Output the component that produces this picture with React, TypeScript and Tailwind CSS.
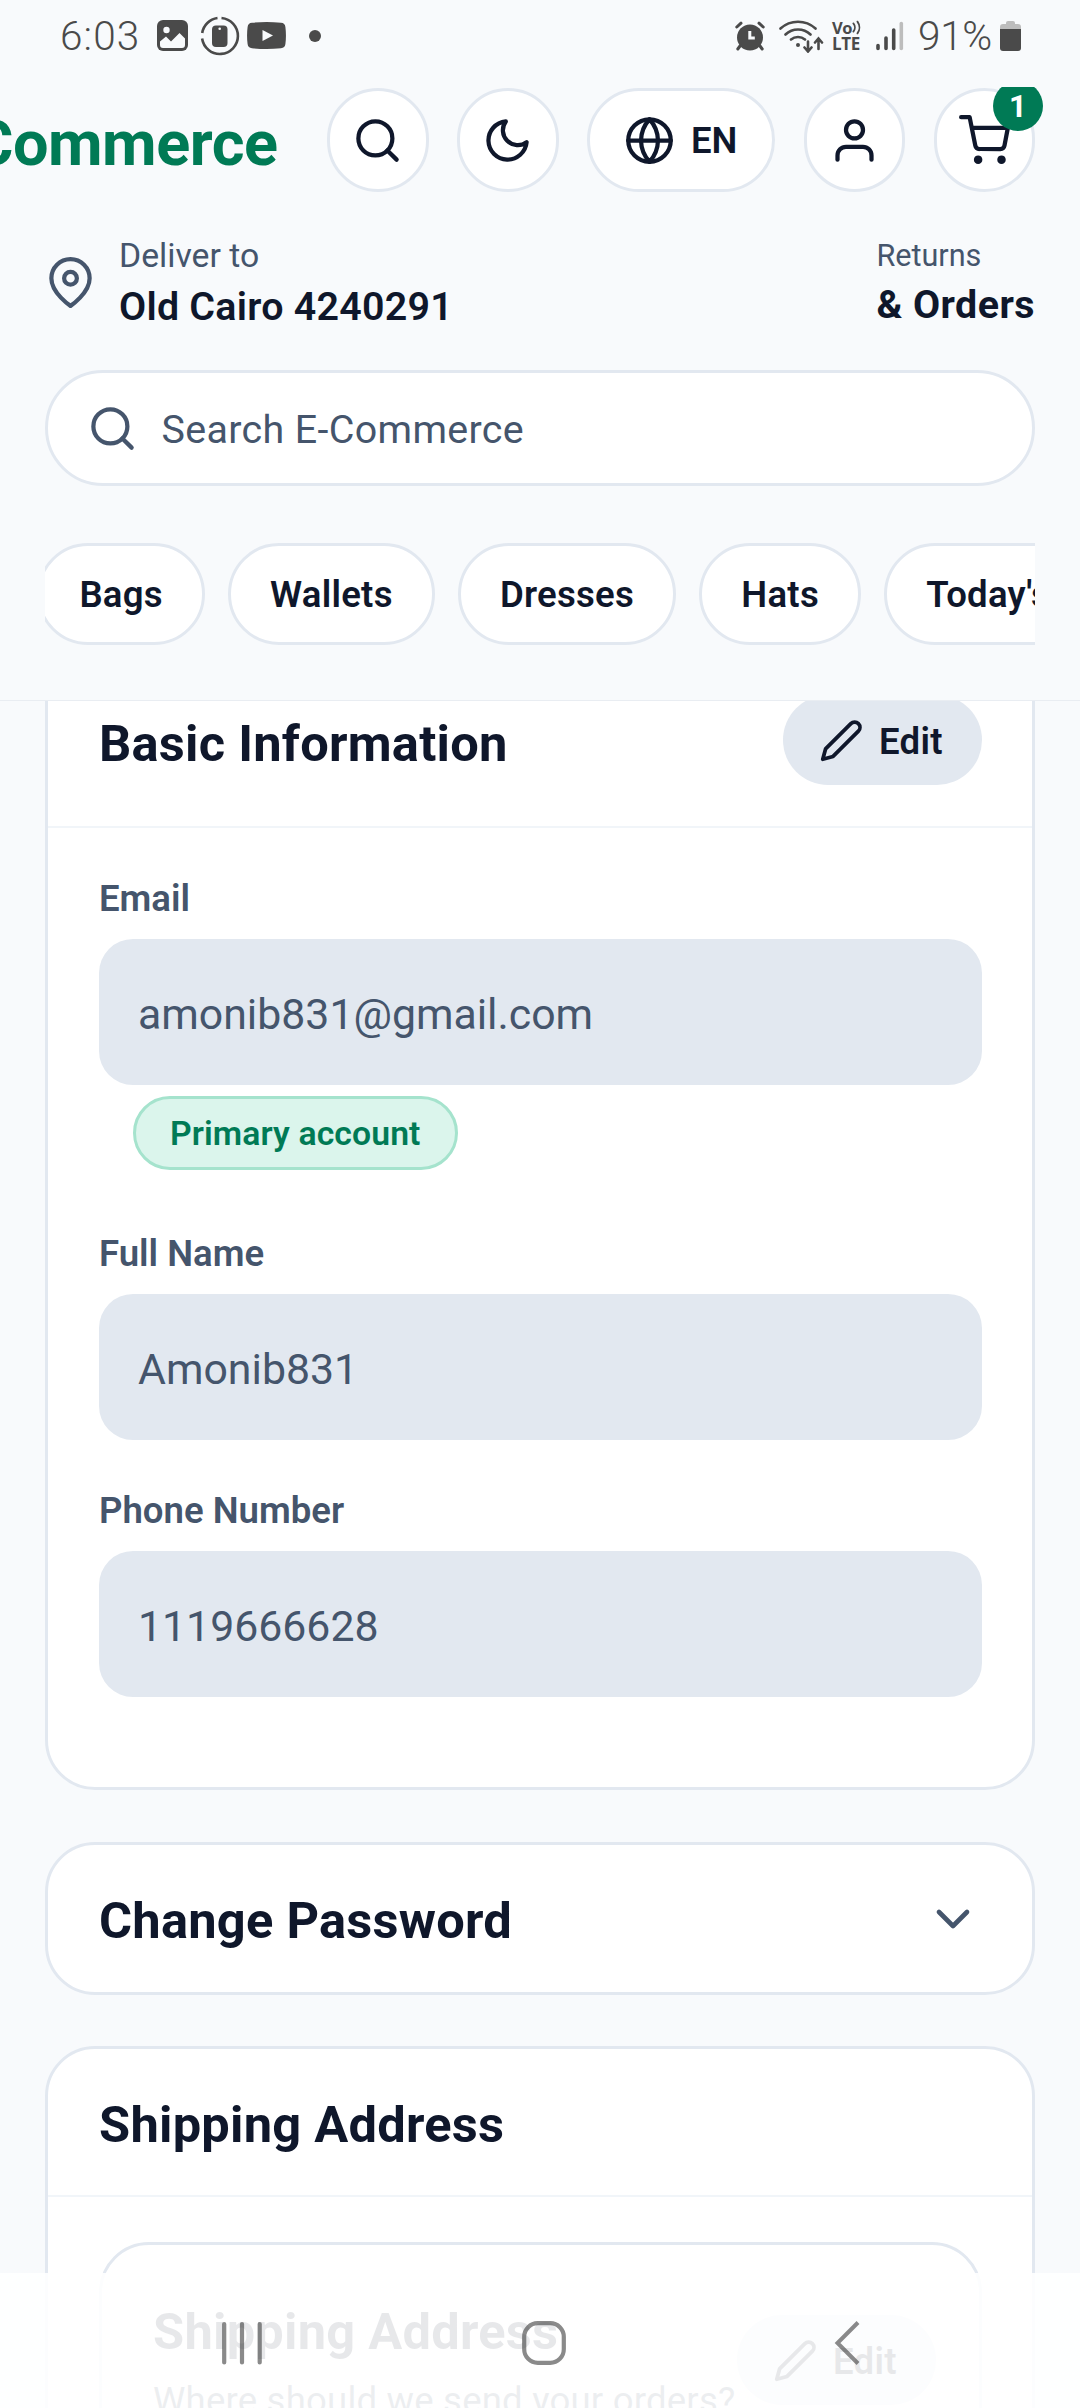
import React from "react";

type IconProps = { className?: string; children: React.ReactNode };

function Icon({ className = "size-[51px]", children }: IconProps) {
  return (
    <svg
      viewBox="0 0 24 24"
      fill="none"
      stroke="currentColor"
      strokeWidth={2}
      strokeLinecap="round"
      strokeLinejoin="round"
      className={`${className} shrink-0`}
    >
      {children}
    </svg>
  );
}

const SearchIcon = () => (
  <Icon>
    <circle cx="11" cy="11" r="8" />
    <path d="M21 21l-4.35-4.35" />
  </Icon>
);

const PenIcon = () => (
  <Icon className="size-[45px]">
    <path d="M17 3a2.828 2.828 0 1 1 4 4L7.5 20.5 2 22l1.5-5.5L17 3z" />
  </Icon>
);

function StatusBar() {
  return (
    <div className="flex h-[87px] shrink-0 items-start justify-between pl-[60px] pr-[59px] text-[#4a4a4a]">
      <div className="flex h-[71px] items-center">
        <span className="w-[97px] text-[40.5px] font-light leading-[70px] tracking-[1.1px]">6:03</span>
        <svg viewBox="0 0 31 31" className="size-[31px]">
          <rect width="31" height="31" rx="6" fill="#4a4a4a" />
          <circle cx="9.5" cy="10" r="3.2" fill="#f8fafc" />
          <path d="M3 21.5l6-5 5 5 8.5-8.5 5.5 5.5V25a3 3 0 0 1-3 3H6a3 3 0 0 1-3-3z" fill="#f8fafc" />
        </svg>
        <svg viewBox="0 0 40 40" className="ml-[12px] size-[40px]" fill="none" stroke="#4a4a4a">
          <path d="M21.5 2a18 18 0 1 1-19.4 20.5M2.2 17A18 18 0 0 1 17.5 2" strokeWidth="2.6" />
          <rect x="12" y="9.5" width="15.5" height="21.5" rx="4" fill="#4a4a4a" stroke="none" />
          <circle cx="19.7" cy="12.8" r="1.3" fill="#f8fafc" stroke="none" />
        </svg>
        <svg viewBox="0 0 39 27" className="ml-[7px] h-[27px] w-[39px]">
          <path d="M5 .8Q19.500-.8 34 .8Q38 1 38.400 5Q39.500 13.500 38.400 22Q38 26 34 26.200Q19.500 27.800 5 26.200Q1 26 .6 22Q-.5 13.500 .6 5Q1 1 5 .8z" fill="#4a4a4a" />
          <path d="M15.500 8l10.500 5.500-10.500 5.500z" fill="#f8fafc" />
        </svg>
        <span className="ml-[23px] size-[12px] rounded-full bg-[#4a4a4a]" />
      </div>
      <div className="flex h-[71px] items-center">
        <svg viewBox="0 0 30 30" className="size-[30px]" fill="none" stroke="#4a4a4a" strokeWidth="3" strokeLinecap="round">
          <circle cx="15" cy="16.500" r="13" fill="#4a4a4a" stroke="none" />
          <path d="M1.800 6l4.200-3.800M28.200 6L24 2.200M5 25l-2.200 3M25 25l2.200 3" />
          <path d="M14.800 10v7h5" stroke="#f8fafc" strokeLinecap="butt" />
        </svg>
        <svg viewBox="0 0 45 34" className="ml-[14px] h-[34px] w-[45px]" fill="none" stroke="#4a4a4a" strokeWidth="2.600" strokeLinecap="round">
          <path d="M1.500 9.500a26 26 0 0 1 35 0M6.500 15.500a18 18 0 0 1 25 0M12 20.500a11 11 0 0 1 14 0" />
          <circle cx="19" cy="26" r="2" fill="#4a4a4a" stroke="none" />
          <path d="M29 22.500v9M25.500 28.500l3.500 4 3.500-4M39.500 30v-9M36 23.500l3.500-4 3.500 4" />
        </svg>
        <div className="ml-[8px] flex w-[32px] flex-col font-['Open_Sans',sans-serif] font-bold">
          <span className="flex items-center text-[16.500px] leading-[15px] tracking-[-0.5px]">
            Vo
            <svg viewBox="0 0 11 16" className="h-[15px] w-[10px]" fill="none" stroke="#4a4a4a" strokeWidth="2" strokeLinecap="round">
              <path d="M1.500 3.500a7 7 0 0 1 0 9M6 1.500a11 11 0 0 1 0 13" />
            </svg>
          </span>
          <span className="text-[17px] leading-[17px] tracking-[-0.3px]">LTE</span>
        </div>
        <svg viewBox="0 0 28 30" className="ml-[12px] h-[30px] w-[28px]" fill="none" stroke="#4a4a4a" strokeWidth="3.600" strokeLinecap="round">
          <path d="M2 24.500v3M10 17v10.500M17.700 9v18.500" />
          <path d="M25.300 2.500v25" stroke="#bdbdbd" />
        </svg>
        <span className="ml-[14px] w-[82px] text-[40.500px] font-light leading-[70px] tracking-[-0.3px]">91%</span>
        <svg viewBox="0 0 21 32" className="h-[32px] w-[21px]">
          <path d="M6 3a2 2 0 0 1 2-2h5a2 2 0 0 1 2 2v1h3a3 3 0 0 1 3 3v3H0V7a3 3 0 0 1 3-3h3z" fill="#bdbdbd" />
          <path d="M0 9h21v19a3 3 0 0 1-3 3H3a3 3 0 0 1-3-3z" fill="#4a4a4a" />
        </svg>
      </div>
    </div>
  );
}

function RoundButton({ children }: { children: React.ReactNode }) {
  return (
    <button className="relative flex h-[104px] w-[101.500px] shrink-0 items-center justify-center rounded-full border-3 border-slate-200 bg-white">
      {children}
    </button>
  );
}

function Header() {
  return (
    <header className="h-[614px] shrink-0 overflow-hidden border-b border-[#e9edf2] px-[45px] pt-px">
      <div className="flex h-[104px] items-center justify-end gap-[28.500px]">
        <span className="mr-[21px] whitespace-nowrap pt-[8px] text-[63px] font-bold leading-[70px] tracking-[-0.5px] text-emerald-700">
          E-Commerce
        </span>
        <RoundButton>
          <SearchIcon />
        </RoundButton>
        <RoundButton>
          <Icon>
            <path d="M21 12.790A9 9 0 1 1 11.210 3 7 7 0 0 0 21 12.790z" />
          </Icon>
        </RoundButton>
        <button className="flex h-[104px] w-[188px] shrink-0 items-center gap-[16px] rounded-full border-3 border-slate-200 bg-white pl-[34px] text-[36.500px] font-semibold">
          <Icon>
            <circle cx="12" cy="12" r="10" />
            <path d="M2 12h20M12 2a15.300 15.300 0 0 1 4 10 15.300 15.300 0 0 1-4 10 15.300 15.300 0 0 1-4-10 15.300 15.300 0 0 1 4-10z" />
          </Icon>
          <span className="pt-[2px]">EN</span>
        </button>
        <RoundButton>
          <Icon>
            <path d="M20 21v-2a4 4 0 0 0-4-4H8a4 4 0 0 0-4 4v2" />
            <circle cx="12" cy="7" r="4" />
          </Icon>
        </RoundButton>
        <RoundButton>
          <Icon>
            <circle cx="9" cy="21" r="1" />
            <circle cx="20" cy="21" r="1" />
            <path d="M1 1h4l2.680 13.390a2 2 0 0 0 2 1.610h9.720a2 2 0 0 0 2-1.610L23 6H6" />
          </Icon>
          <span className="absolute -right-[11px] -top-[10px] flex size-[50px] items-center justify-center rounded-full bg-emerald-700 text-[31px] font-bold leading-none text-white">
            1
          </span>
        </RoundButton>
      </div>

      <div className="mt-[39px] flex h-[101px] items-start justify-between">
        <div className="flex items-center gap-[23px]">
          <span className="text-slate-600">
            <Icon>
              <path d="M21 10c0 7-9 13-9 13s-9-6-9-13a9 9 0 0 1 18 0z" />
              <circle cx="12" cy="10" r="3" />
            </Icon>
          </span>
          <div className="pt-px">
            <p className="h-[48px] text-[33.750px] leading-[48px] text-slate-600">Deliver to</p>
            <p className="h-[53px] text-[39.400px] font-semibold leading-[53px] tracking-[0.25px]">Old Cairo 4240291</p>
          </div>
        </div>
        <div className="pt-[2px]">
          <p className="h-[46px] text-[30.600px] leading-[46px] text-slate-600">Returns</p>
          <p className="h-[52px] text-[39.400px] font-bold leading-[52px] tracking-[0.45px]">&amp; Orders</p>
        </div>
      </div>

      <div className="mt-[38px] flex h-[116px] items-center gap-[23.500px] rounded-full border-3 border-slate-200 bg-white pl-[39px] text-[39.400px] tracking-[0.35px] text-slate-600">
        <SearchIcon />
        <span className="pt-[4px]">Search E-Commerce</span>
      </div>

      <nav className="mt-[57px] flex gap-[22.500px] overflow-hidden">
        {["Bags", "Wallets", "Dresses", "Hats", "Today's Deals"].map((label) => (
          <span
            key={label}
            className="flex h-[102px] shrink-0 items-center whitespace-nowrap rounded-full border-3 border-slate-200 bg-white px-[39.400px] pt-[3px] text-[36.560px] font-semibold tracking-[0.25px] first:-ml-[8px]"
          >
            {label}
          </span>
        ))}
      </nav>
    </header>
  );
}

function EditButton() {
  return (
    <button className="flex h-[90px] w-[199px] shrink-0 items-center gap-[15px] rounded-full bg-slate-200 pl-[36px] text-[36.560px] font-semibold tracking-[0.3px]">
      <PenIcon />
      <span className="pt-[4px]">Edit</span>
    </button>
  );
}

function Field({ label, value }: { label: string; value: string }) {
  return (
    <div className="pt-[44px]">
      <p className="h-[54px] text-[36.560px] font-semibold leading-[54px] text-slate-600">{label}</p>
      <div className="mt-[13px] flex h-[146px] items-center rounded-[34px] bg-slate-200 pl-[39px] pt-[4px] text-[42.800px] text-slate-600">
        {value}
      </div>
    </div>
  );
}

const cardTitle = "text-[50.600px] font-bold leading-[64px] tracking-[0.25px]";

function Main() {
  return (
    <main className="min-h-0 flex-1 overflow-hidden px-[45px]">
      <section className="-mt-[50px] h-[1139px] rounded-[50px] border-3 border-slate-200 bg-white">
        <div className="flex h-[174px] items-center justify-between border-b-2 border-slate-100 pl-[51px] pr-[50px]">
          <h2 className={`${cardTitle} pt-[7px]`}>Basic Information</h2>
          <EditButton />
        </div>
        <div className="pl-[51px] pr-[50px]">
          <Field label="Email" value="amonib831@gmail.com" />
          <div className="ml-[34px] mt-[11px] flex h-[74px] w-fit items-center rounded-full border-3 border-[#a5e3cd] bg-[#dbf5ec] px-[34px] pt-[3px] text-[33.750px] font-semibold tracking-[0.1px] text-emerald-700">
            Primary account
          </div>
          <div className="pt-[13px]">
            <Field label="Full Name" value="Amonib831" />
          </div>
          <Field label="Phone Number" value="1119666628" />
        </div>
      </section>

      <section className="mt-[52px] flex h-[153px] items-center justify-between rounded-[50px] border-3 border-slate-200 bg-white pl-[51px] pr-[51px]">
        <h2 className={`${cardTitle} pt-[4px]`}>Change Password</h2>
        <span className="text-slate-600">
          <Icon className="size-[56px]">
            <path d="M6 9l6 6 6-6" />
          </Icon>
        </span>
      </section>

      <section className="mt-[51px] h-[900px] rounded-[50px] border-3 border-slate-200 bg-white">
        <div className="flex h-[148px] items-center border-b-2 border-slate-100 pl-[51px]">
          <h2 className={`${cardTitle} pt-[6px]`}>Shipping Address</h2>
        </div>
        <div className="ml-[51px] mr-[50px] mt-[45px] flex h-[600px] items-start justify-between rounded-[50px] border-3 border-slate-200 pl-[51px] pr-[43px]">
          <div className="pt-[55px]">
            <h3 className={cardTitle}>Shipping Address</h3>
            <p className="mt-[9px] whitespace-nowrap text-[36.560px] leading-[55px] tracking-[0.2px] text-slate-600">
              Where should we send your orders?
            </p>
          </div>
          <div className="-ml-[60px] pt-[70px]">
            <EditButton />
          </div>
        </div>
      </section>
    </main>
  );
}

function NavigationBar() {
  return (
    <div className="absolute inset-x-0 bottom-0 flex h-[135px] items-center bg-white/90 pl-[218px] pt-[5px] text-[#3c3c3c]/60">
      <svg viewBox="0 0 48 48" className="size-[48px]" fill="none" stroke="currentColor" strokeWidth="4.200" strokeLinecap="round">
        <path d="M6.200 5v38.500M24 5v38.500M41.700 5v38.500" />
      </svg>
      <svg viewBox="0 0 48 48" className="ml-[254px] size-[48px]" fill="none" stroke="currentColor" strokeWidth="4.200">
        <rect x="4.200" y="4.200" width="39.600" height="39.600" rx="13.500" />
      </svg>
      <svg viewBox="0 0 48 48" className="ml-[255px] size-[48px]" fill="none" stroke="currentColor" strokeWidth="4">
        <path d="M35 3.500L14.500 24 35 44.500" />
      </svg>
    </div>
  );
}

export default function App() {
  return (
    <div className="relative flex h-[2408px] w-[1080px] flex-col overflow-hidden bg-slate-50 font-[Roboto,sans-serif] text-slate-900">
      <StatusBar />
      <Header />
      <Main />
      <NavigationBar />
    </div>
  );
}
